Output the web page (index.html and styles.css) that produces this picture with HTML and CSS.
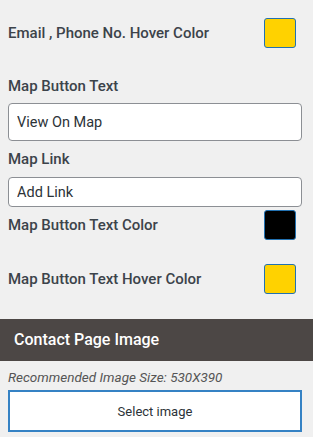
FILE: index.html
```html
<!DOCTYPE html>
<html lang="en">
<head>
    <meta charset="UTF-8">
    <meta name="viewport" content="width=device-width, initial-scale=1.0">
    <title>Contact Settings</title>
    <link rel="stylesheet" href="styles.css">
</head>
<body>
    <div class="panel">
        <div class="color-row first">
            <label>Email , Phone No. Hover Color</label>
            <span class="swatch yellow"></span>
        </div>

        <label class="field-label">Map Button Text</label>
        <input class="text-input tall" type="text" value="View On Map">

        <label class="field-label small-gap">Map Link</label>
        <input class="text-input" type="text" value="Add Link">

        <div class="color-row">
            <label>Map Button Text Color</label>
            <span class="swatch black"></span>
        </div>
        <div class="color-row second">
            <label>Map Button Text Hover Color</label>
            <span class="swatch yellow"></span>
        </div>
    </div>

    <div class="section-head">Contact Page Image</div>
    <div class="panel">
        <p class="hint">Recommended Image Size: 530X390</p>
        <button class="select-btn">Select image</button>
    </div>
</body>
</html>
```

FILE: styles.css
```css
body {
    margin: 0;
    background: #f0f0f0;
    font-family: Roboto, "Liberation Sans", sans-serif;
    color: #3c434a;
}
.panel {
    padding: 0 11px 0 8px;
}
.color-row {
    display: flex;
    justify-content: space-between;
    align-items: center;
    height: 30px;
}
.color-row.first {
    margin-top: 18px;
    margin-bottom: 29px;
}
.color-row.second {
    margin-top: 24px;
    margin-bottom: 25px;
}
.color-row label,
.field-label {
    font-size: 15px;
    font-weight: 500;
    color: #3c434a;
}
.swatch {
    width: 30px;
    height: 28px;
    border: 1px solid #2271b1;
    border-radius: 3px;
    margin-right: 6px;
}
.swatch.yellow {
    background: #ffd200;
}
.swatch.black {
    background: #000;
}
.field-label {
    display: block;
    line-height: 18px;
    margin-bottom: 8px;
}
.field-label.small-gap {
    margin-top: 9px;
    margin-bottom: 9px;
}
.text-input {
    display: block;
    box-sizing: border-box;
    width: 100%;
    height: 30px;
    padding: 0 8px;
    border: 1px solid #8c8f94;
    border-radius: 4px;
    background: #fff;
    font-family: Roboto, "Liberation Sans", sans-serif;
    font-size: 14.5px;
    color: #2c3338;
    margin: 0 0 3px;
}
.text-input.tall {
    height: 38px;
    margin-bottom: 0;
}
.section-head {
    background: #4c4745;
    color: #fff;
    font-size: 16px;
    font-weight: 500;
    height: 42px;
    line-height: 42px;
    padding-left: 14px;
}
.hint {
    margin: 8px 0 5px;
    font-size: 13.5px;
    font-style: italic;
    color: #555;
    line-height: 16px;
}
.select-btn {
    display: block;
    box-sizing: border-box;
    width: 100%;
    height: 42px;
    background: #fff;
    border: 2px solid #3582c4;
    font-family: Roboto, "Liberation Sans", sans-serif;
    font-size: 13px;
    color: #2c3338;
    cursor: pointer;
}
```
